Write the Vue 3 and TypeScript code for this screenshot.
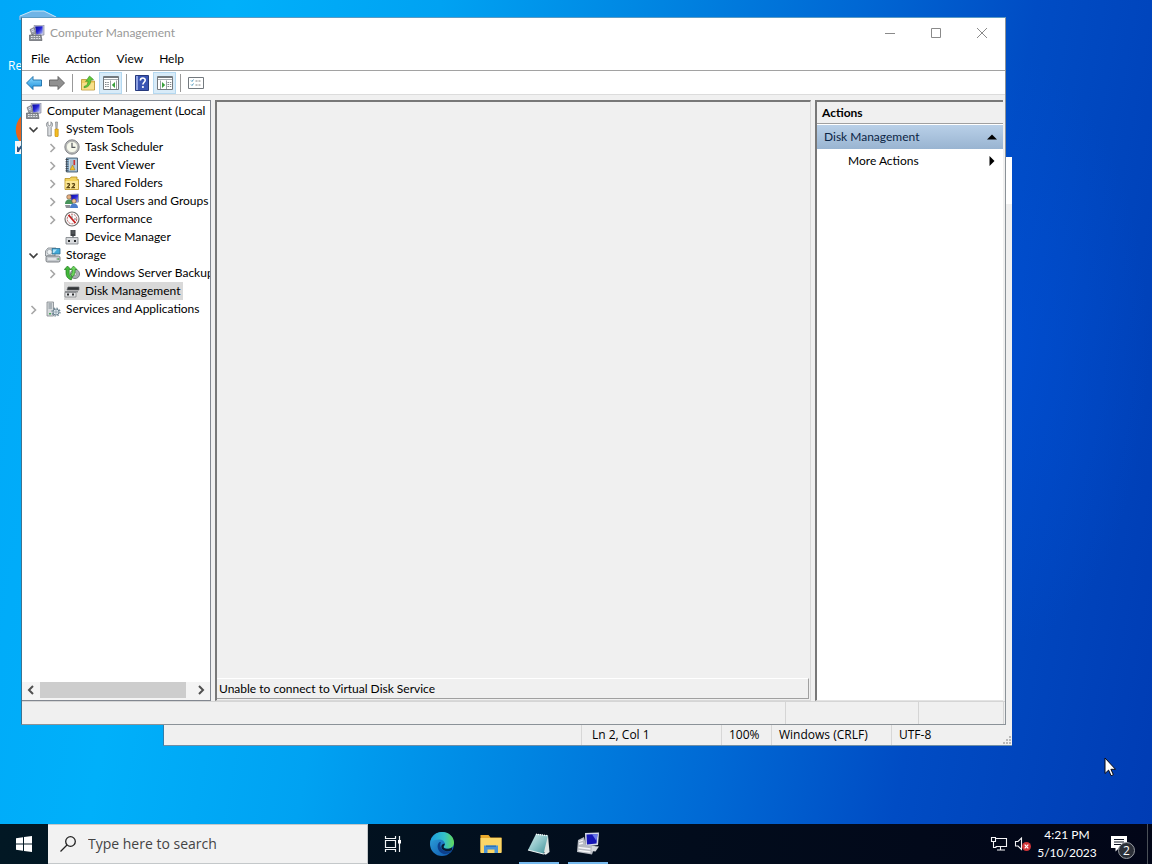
<script setup lang="ts">
import { ref } from 'vue'

interface TreeNode {
  label: string
  icon: string
  level: number
  state?: 'open' | 'closed'
  selected?: boolean
}

interface Tool {
  label: string
  icon: string
  pressed?: boolean
  divided?: boolean
}

const menus: string[] = ['File', 'Action', 'View', 'Help']

const tools: Tool[] = [
  { label: 'Back', icon: 'back' },
  { label: 'Forward', icon: 'forward', divided: true },
  { label: 'Up One Level', icon: 'up' },
  { label: 'Show/Hide Console Tree', icon: 'tree-pane', pressed: true, divided: true },
  { label: 'Help', icon: 'help' },
  { label: 'Show/Hide Action Pane', icon: 'action-pane', pressed: true, divided: true },
  { label: 'Properties', icon: 'props' },
]

const nodes: TreeNode[] = [
  { label: 'Computer Management (Local', icon: 'computer', level: 0 },
  { label: 'System Tools', icon: 'tools', level: 1, state: 'open' },
  { label: 'Task Scheduler', icon: 'clock', level: 2, state: 'closed' },
  { label: 'Event Viewer', icon: 'events', level: 2, state: 'closed' },
  { label: 'Shared Folders', icon: 'shared', level: 2, state: 'closed' },
  { label: 'Local Users and Groups', icon: 'users', level: 2, state: 'closed' },
  { label: 'Performance', icon: 'perf', level: 2, state: 'closed' },
  { label: 'Device Manager', icon: 'device', level: 2 },
  { label: 'Storage', icon: 'storage', level: 1, state: 'open' },
  { label: 'Windows Server Backup', icon: 'backup', level: 2, state: 'closed' },
  { label: 'Disk Management', icon: 'disk', level: 2, selected: true },
  { label: 'Services and Applications', icon: 'services', level: 1, state: 'closed' },
]

const search = ref('')
</script>

<template>
  <div class="screen">
    <svg class="defs" aria-hidden="true">
      <defs>
        <linearGradient id="g-screen" x1="0" y1="0" x2="1" y2="1">
          <stop offset="0" stop-color="#0a0a8c" /><stop offset=".5" stop-color="#2424d8" /><stop offset="1" stop-color="#b8c4f8" />
        </linearGradient>
        <linearGradient id="g-edge" x1="0" y1="0" x2="1" y2="1">
          <stop offset="0" stop-color="#2fa8e0" /><stop offset="1" stop-color="#0c4fa8" />
        </linearGradient>
        <linearGradient id="g-edge-top" x1="0" y1="0" x2="1" y2="0">
          <stop offset="0" stop-color="#1b9de0" /><stop offset=".6" stop-color="#35c1c8" /><stop offset="1" stop-color="#62d957" />
        </linearGradient>
        <linearGradient id="g-note" x1="0" y1="0" x2="1" y2="1">
          <stop offset="0" stop-color="#d8eeee" /><stop offset=".5" stop-color="#8cc4c8" /><stop offset="1" stop-color="#3f8f96" />
        </linearGradient>
        <linearGradient id="g-back" x1="0" y1="0" x2="0" y2="1">
          <stop offset="0" stop-color="#8fdcff" /><stop offset="1" stop-color="#1b8fdc" />
        </linearGradient>

        <symbol id="i-computer" viewBox="0 0 16 16">
          <path d="M5 0.5 15 0v10l-8 1z" fill="#c9cce0" stroke="#777a90" stroke-width=".6" />
          <path d="M6.2 1.6 13.6 1.2v7.4L7.4 9.4z" fill="url(#g-screen)" />
          <path d="M1 4.500 5 2.500l2 5.500-4 2z" fill="#9aa0ac" stroke="#555" stroke-width=".5" />
          <path d="M2.300 5.200l2.500-1.100M2.800 6.800l2.500-1.100" stroke="#eef" stroke-width=".8" />
          <path d="M0.500 10h11.500l1 5.500H0.500z" fill="#8b9096" stroke="#50545a" stroke-width=".6" />
          <path d="M2 11.500h9M2 13.500h10" stroke="#e6e8ea" stroke-width="1" stroke-dasharray="1.6 1" />
        </symbol>
        <symbol id="i-tools" viewBox="0 0 16 16">
          <path d="M3 .8v3l1.400 1L6 3.800v-3C8 2 8 5 6.200 6.400V15H2.800V6.400C1 5 1 2 3 .8z" fill="#dcdfe2" stroke="#777c82" stroke-width=".8" />
          <path d="M10.500 1h2l-.4 6.500h-1.200z" fill="#bfc4c8" stroke="#777" stroke-width=".6" />
          <path d="M10 8h3.200v6.500a1.600 1.600 0 0 1-3.200 0z" fill="#f3bd24" stroke="#c48c10" stroke-width=".7" />
        </symbol>
        <symbol id="i-clock" viewBox="0 0 16 16">
          <circle cx="8" cy="8" r="7.200" fill="#b9babc" stroke="#6f7072" stroke-width=".8" />
          <circle cx="8" cy="8" r="5.600" fill="#f6f8ec" stroke="#9b9c98" stroke-width=".5" />
          <path d="M8 3.800V8.400h3.400" fill="none" stroke="#55585c" stroke-width="1.200" />
        </symbol>
        <symbol id="i-events" viewBox="0 0 16 16">
          <path d="M2.500 1h11v14h-11z" fill="#8fb4d0" stroke="#4b5e70" stroke-width=".9" />
          <path d="M5 2.500h7.500v11H5z" fill="#cfdde8" />
          <path d="M6 4h5.500M6 6h5.500M6 8h5.500M6 10h5.500M6 12h5.500" stroke="#6d8ca4" stroke-width=".8" />
          <path d="M1.500 2.500h3M1.500 4.800h3M1.500 7.100h3M1.500 9.400h3M1.500 11.700h3M1.500 13.800h3" stroke="#333c46" stroke-width=".9" />
          <path d="M9.500 3h1.600v5H9.500z" fill="#cf2f2f" />
          <path d="M6 13l2.500-5L11 13z" fill="#f2c22c" stroke="#a27a0c" stroke-width=".5" />
        </symbol>
        <symbol id="i-shared" viewBox="0 0 16 16">
          <path d="M1 3.500h5l1-1.500h6v2.500h1.500v10H1z" fill="#f2d25c" stroke="#b58e20" stroke-width=".8" />
          <path d="M1.500 6h12.500v8H1.500z" fill="#fbe694" />
          <path d="M3 9.200c1-1.200 3-.6 2.400 1L3.200 12.600h2.800M8 9.200c1-1.200 3-.6 2.400 1l-2.200 2.400H11" fill="none" stroke="#5d4712" stroke-width="1.300" />
        </symbol>
        <symbol id="i-users" viewBox="0 0 16 16">
          <path d="M6 1.500 14.500 1v8l-7 .8z" fill="url(#g-screen)" stroke="#9ba0b8" stroke-width="1" />
          <circle cx="5" cy="4" r="2.300" fill="#e4b083" stroke="#5a3d20" stroke-width=".5" />
          <path d="M1 11c0-3 1.600-4.500 4-4.500S9 8 9 11z" fill="#47935a" />
          <circle cx="10" cy="8" r="2.200" fill="#eec08f" stroke="#5a3d20" stroke-width=".5" />
          <path d="M6 15c0-3 1.600-4.500 4-4.500s4 1.500 4 4.500z" fill="#4a7ccc" />
          <path d="M1 12h5v3H2z" fill="#8e9298" />
        </symbol>
        <symbol id="i-perf" viewBox="0 0 16 16">
          <circle cx="8" cy="8" r="7" fill="#fbfbfb" stroke="#74706f" stroke-width="1.200" />
          <circle cx="8" cy="8" r="4.800" fill="none" stroke="#b05a5a" stroke-width="1" stroke-dasharray="2 1" />
          <path d="M4.500 4l7 8" stroke="#c61f1f" stroke-width="1.800" />
          <path d="M8 4.500v2.500M10 8h2" stroke="#555" stroke-width=".8" />
        </symbol>
        <symbol id="i-device" viewBox="0 0 16 16">
          <path d="M6.500 1h5v6h-5z" fill="#3d4044" />
          <path d="M7.500 2h3M7.500 4h3" stroke="#777c80" stroke-width=".7" />
          <path d="M8 7h2v2H8z" fill="#8b8f94" />
          <path d="M2 8.500h12V15H2z" fill="#d8dadd" stroke="#7a7e83" stroke-width=".8" />
          <path d="M4 11h2v2H4zM10 11h2v2h-2z" fill="#26282a" />
        </symbol>
        <symbol id="i-storage" viewBox="0 0 16 16">
          <path d="M.5 4 3 1h8l-1 4v4H.5z" fill="#dfe3e6" stroke="#777e84" stroke-width=".8" />
          <path d="M7 1.500h8v5.500H7z" fill="#42a9d8" stroke="#2f6d90" stroke-width=".8" />
          <path d="M8 2.500h4L9 6H8z" fill="#b3e4f7" />
          <circle cx="4.500" cy="5" r="2.600" fill="#eef2f4" stroke="#8c9399" stroke-width=".7" />
          <rect x="1" y="9" width="14" height="6" rx="1.500" fill="#c5c9cd" stroke="#666b70" stroke-width=".8" />
          <path d="M3 12h8" stroke="#f5f6f7" stroke-width="1.200" />
          <path d="M12.500 11.200h1.300v1.500h-1.300z" fill="#36a53c" />
        </symbol>
        <symbol id="i-backup" viewBox="0 0 16 16">
          <circle cx="11" cy="9" r="4.600" fill="#a9aeb3" stroke="#696e73" stroke-width=".8" />
          <circle cx="11" cy="9" r="1.500" fill="#eee" stroke="#777" stroke-width=".5" />
          <path d="M3.500 1 7 4.500H5.200V8c0 2 1 3.500 3 4.500l-1 2.500C3.500 13.500 2 11.500 2 8V4.500H.3z" fill="#42b83a" stroke="#1f7a1c" stroke-width=".7" />
          <path d="M9.500 1 13 4.500h-1.800c0 3-.2 5-2.700 7.500L6.800 9.500C8.200 8.200 8.300 7 8.300 4.500H6.500z" fill="#6bd45c" stroke="#1f7a1c" stroke-width=".6" />
        </symbol>
        <symbol id="i-disk" viewBox="0 0 16 16">
          <path d="M4 4h11v3H3z" fill="#323537" stroke="#62666a" stroke-width=".7" />
          <path d="M1 8h13v1.500H1z" fill="#8b8e91" />
          <path d="M1 9.500h11V14H1z" fill="#e5e6e8" stroke="#77797c" stroke-width=".7" />
          <path d="M3 10.500h2v2H3zM8 10.500h2v2H8z" fill="#2d2f31" />
        </symbol>
        <symbol id="i-services" viewBox="0 0 16 16">
          <path d="M2 1h6.500v14H2z" fill="#d6dadd" stroke="#80868b" stroke-width=".8" />
          <path d="M3.500 3h3.500M3.500 5h3.500M3.500 7h3.500" stroke="#758088" stroke-width=".9" />
          <path d="M4 12h2v1.500H4z" fill="#4ba65a" />
          <circle cx="11" cy="11" r="3" fill="#dce7ee" stroke="#6d8492" stroke-width="1" />
          <circle cx="11" cy="11" r="4" fill="none" stroke="#6d8492" stroke-width="1.200" stroke-dasharray="1.500 1.640" />
          <circle cx="11" cy="11" r="1.100" fill="#fff" stroke="#6d8492" stroke-width=".7" />
        </symbol>

        <symbol id="i-back" viewBox="0 0 16 16">
          <path d="M.5 8 7 1.500v3.500h8.500v6H7v3.500z" fill="url(#g-back)" stroke="#1c6ea8" stroke-width=".9" stroke-linejoin="round" />
        </symbol>
        <symbol id="i-forward" viewBox="0 0 16 16">
          <path d="M15.500 8 9 1.500v3.500H.5v6H9v3.500z" fill="#909090" stroke="#5d5d5d" stroke-width=".9" stroke-linejoin="round" />
        </symbol>
        <symbol id="i-up" viewBox="0 0 16 16">
          <path d="M1.500 4.500h5l1 1.500h7v9h-13z" fill="#f0cf62" stroke="#b99330" stroke-width=".8" />
          <path d="M2 8h12v6.500H2z" fill="#f8e08a" />
          <path d="M4 11.500c3-.5 4-3 4-5.500L5.600 6.500 9.500 1l4 3.500-2.800.8c.2 4-2.700 7.400-6.700 7.400z" fill="#5fc83a" stroke="#3a8f20" stroke-width=".6" />
        </symbol>
        <symbol id="i-tree-pane" viewBox="0 0 16 16">
          <path d="M.5 1.500h15v13H.5z" fill="#fff" stroke="#73797e" />
          <path d="M.5 2.500h15" stroke="#73797e" stroke-width="1" /><path d="M1 4.500h14" stroke="#a5aaae" />
          <path d="M7.500 5.500V14M13.500 5.500V14" stroke="#9aa0a4" />
          <path d="M2 7.500h4M2 9.500h4M2 11.500h4" stroke="#83898d" stroke-dasharray="1.500 .8" />
          <path d="M12 7v6L8.800 10z" fill="#39a03a" />
        </symbol>
        <symbol id="i-action-pane" viewBox="0 0 16 16">
          <path d="M.5 1.500h15v13H.5z" fill="#fff" stroke="#73797e" />
          <path d="M.5 2.500h15" stroke="#73797e" /><path d="M1 4.500h14" stroke="#a5aaae" />
          <path d="M3.500 5.500V14M9.500 5.500V14" stroke="#9aa0a4" />
          <path d="M10.500 7.500h4M10.500 9.500h4M10.500 11.500h4" stroke="#83898d" stroke-dasharray="1.500 .8" />
          <path d="M5 7v6l3.200-3z" fill="#39a03a" />
        </symbol>
        <symbol id="i-help" viewBox="0 0 16 16">
          <path d="M1.500.5h13v15h-13z" fill="#3a55b4" stroke="#26397c" />
          <path d="M2 1h2v14H2z" fill="#8fa2e2" />
          <path d="M6.400 5.500c0-3.400 5-3.200 4.800-.2-.1 1.900-2.300 2-2.300 4.200" fill="none" stroke="#fff" stroke-width="1.600" />
          <circle cx="8.900" cy="12" r="1.100" fill="#fff" />
        </symbol>
        <symbol id="i-props" viewBox="0 0 16 16">
          <path d="M.5 2.500h15v11H.5z" fill="#fff" stroke="#73797e" />
          <path d="M3 5.500l1 1 1.500-2M3 9.500l1 1L5.500 8.500" fill="none" stroke="#3c8fb8" stroke-width=".9" />
          <path d="M7.500 6h6M7.500 10h6" stroke="#888" stroke-dasharray="2 1" />
        </symbol>
        <symbol id="i-open" viewBox="0 0 16 16">
          <path d="M3.500 6.500l4 4 4-4" fill="none" stroke="#404040" stroke-width="1.700" />
        </symbol>
        <symbol id="i-closed" viewBox="0 0 16 16">
          <path d="M5.500 5 9.500 9l-4 4" fill="none" stroke="#a6a6a6" stroke-width="1.600" />
        </symbol>
      </defs>
    </svg>

    <main class="desktop">
      <svg class="bin" viewBox="0 0 40 10" aria-hidden="true">
        <path d="M0 6 13 1h12l13 6v3H0z" fill="#6fb4e6" /><path d="M1 6 13 1h12l12 6" fill="none" stroke="#c7e4f8" />
      </svg>
      <span class="bin-label">Re</span>
      <svg class="shortcut" viewBox="0 0 20 50" aria-hidden="true">
        <path d="M20 2C3 8 0 22 5 32c3 6 9 8 15 8z" fill="#e8641c" /><path d="M20 2C11 6 8 16 9 24l11 4z" fill="#a63a2c" />
        <path d="M2 34h18v13H2z" fill="#f4f6f8" /><path d="M4 45V39l2 2c1-2 2-3 4-3v3c-2 0-3 1-4 4z" fill="#2c4f80" />
      </svg>

      <section class="notepad" aria-label="Text editor">
        <div class="notepad-top"></div>
        <div class="notepad-body"></div>
        <footer class="notepad-status">
          <span class="cell grow"></span>
          <span class="cell position">Ln 2, Col 1</span>
          <span class="cell zoom">100%</span>
          <span class="cell endings">Windows (CRLF)</span>
          <span class="cell encoding">UTF-8</span>
          <svg class="grip" viewBox="0 0 10 10" aria-hidden="true">
            <path d="M7 1h2v2H7zM7 4h2v2H7zM4 4h2v2H4zM7 7h2v2H7zM4 7h2v2H4zM1 7h2v2H1z" fill="#b9b9b9" />
          </svg>
        </footer>
      </section>

      <section class="window" aria-label="Computer Management">
        <header class="titlebar">
          <svg class="icon"><use href="#i-computer" /></svg>
          <h1 class="title">Computer Management</h1>
          <div class="controls">
            <button type="button" aria-label="Minimize"><svg viewBox="0 0 12 12"><path d="M1 6.500h10" /></svg></button>
            <button type="button" aria-label="Maximize"><svg viewBox="0 0 12 12"><path d="M1.500 1.500h9v9h-9z" /></svg></button>
            <button type="button" aria-label="Close"><svg viewBox="0 0 12 12"><path d="M1 1l10 10M11 1 1 11" /></svg></button>
          </div>
        </header>
        <nav class="menubar">
          <button v-for="menu in menus" :key="menu" type="button">{{ menu }}</button>
        </nav>
        <div class="toolbar">
          <button
            v-for="tool in tools"
            :key="tool.label"
            type="button"
            :class="{ pressed: tool.pressed, divided: tool.divided }"
            :aria-label="tool.label"
          >
            <svg class="icon"><use :href="'#i-' + tool.icon" /></svg>
          </button>
        </div>

        <div class="panes">
          <aside class="tree-pane">
            <ul class="tree">
              <li v-for="node in nodes" :key="node.label" :class="['node', 'level-' + node.level]">
                <span v-if="node.level > 0" class="toggle">
                  <svg v-if="node.state" class="icon"><use :href="'#i-' + node.state" /></svg>
                </span>
                <button type="button" :class="['node-button', { selected: node.selected }]">
                  <svg class="icon"><use :href="'#i-' + node.icon" /></svg>
                  <span class="node-label">{{ node.label }}</span>
                </button>
              </li>
            </ul>
            <div class="scrollbar">
              <button type="button" aria-label="Scroll left"><svg viewBox="0 0 8 10"><path d="M6 1 2 5l4 4" /></svg></button>
              <div class="track"><div class="thumb"></div></div>
              <button type="button" aria-label="Scroll right"><svg viewBox="0 0 8 10"><path d="M2 1l4 4-4 4" /></svg></button>
            </div>
          </aside>

          <section class="content-pane">
            <p class="message">Unable to connect to Virtual Disk Service</p>
          </section>

          <aside class="actions-pane">
            <h2 class="actions-title">Actions</h2>
            <button type="button" class="actions-group">
              <span>Disk Management</span>
              <svg viewBox="0 0 10 10"><path d="M0 7.500h10L5 2.500z" /></svg>
            </button>
            <button type="button" class="actions-item">
              <span>More Actions</span>
              <svg viewBox="0 0 10 10"><path d="M2.500 0v10l5-5z" /></svg>
            </button>
          </aside>
        </div>

        <footer class="statusbar">
          <span></span><span class="status-mid"></span><span class="status-end"></span>
        </footer>
      </section>

      <svg class="cursor" viewBox="0 0 12 20" aria-hidden="true">
        <path d="M1 1v15.500l3.600-3.400 2.500 5.600 2.300-1-2.500-5.400h4.600z" fill="#fff" stroke="#0a0a14" />
      </svg>
    </main>

    <footer class="taskbar">
      <button type="button" class="start" aria-label="Start">
        <svg viewBox="0 0 16 16"><path d="M0 2.200 7 1.200v6.300H0zM8 1.100 16 0v7.500H8zM0 8.500h7v6.300l-7-1zM8 8.500h8V16l-8-1.100z" fill="#fff" /></svg>
      </button>
      <label class="search">
        <svg viewBox="0 0 16 16" aria-hidden="true"><circle cx="10.500" cy="5.500" r="4.800" /><path d="M7 9 .5 15.500" /></svg>
        <input v-model="search" type="text" placeholder="Type here to search" aria-label="Search" />
      </label>
      <div class="apps">
        <button type="button" aria-label="Task View">
          <svg class="task-view" viewBox="0 0 18 18"><path d="M1.500 1v2.500h10V1M1.500 17v-2.500h10V17M1.500 5.500h10v7h-10zM15.500 1v16" fill="none" stroke="#f2f4f6" stroke-width="1.200" /><path d="M14 5h3v3.500h-3z" fill="#fff" /></svg>
        </button>
        <button type="button" aria-label="Edge">
          <svg viewBox="0 0 24 24">
            <circle cx="12" cy="12" r="12" fill="url(#g-edge)" />
            <path d="M.3 10C1.500 4 6 0 12 0c7 0 12 5 12 10.500 0 4-3 6.300-6.500 6.300-2.500 0-3.800-1-3.800-2 0-.8 1.100-1.200 1.100-3 0-2.300-2.300-4.300-5.600-4.300C5 7.500 1.500 8.500.3 10z" fill="url(#g-edge-top)" />
            <path d="M9.500 10c-3.500 3-2 10 3.500 11.700 3 .9 6.500-.2 9-2.900-3 1.300-6.500 1-9-.8C10.300 16 9.500 13 11 10.300z" fill="#0d3f8c" />
            <path d="M14.500 11.500c1 2.200-1.800 2.600-.5 4.200 1.500 1.700 5 1.500 8.200-.4l-.3 3c-3 1.500-7 1.300-9.200-.8-2-2-2-5 1.800-6z" fill="#071c33" />
          </svg>
        </button>
        <button type="button" aria-label="File Explorer">
          <svg viewBox="0 0 24 24">
            <path d="M1.500 3h8l2 2.500h11V20h-21z" fill="#e9a92c" /><path d="M1.500 6h21v15h-21z" fill="#fbd667" />
            <path d="M5 13.500h14V21h-3.500v-3.500h-7V21H5z" fill="#4a94d6" /><path d="M7 13.500h10v1.500H7z" fill="#2c74b8" />
          </svg>
        </button>
        <button type="button" class="running" aria-label="Notepad">
          <svg viewBox="0 0 24 24"><path d="M9 2 21 3.500 22.500 20l-4 3z" fill="#dfe5e2" /><path d="M9 2l12 1.500L16.500 22 1 18z" fill="url(#g-note)" /><path d="M1 18l15.500 4L20 21" fill="none" stroke="#eef4f4" stroke-width="1.200" /><path d="M9 2.300 21 3.800" stroke="#fff" stroke-width="1.400" stroke-dasharray="1 1" /></svg>
        </button>
        <button type="button" class="running" aria-label="Computer Management">
          <svg viewBox="0 0 24 24">
            <path d="M9 1 23 .5 22 13l-12.500 1.500z" fill="#d5d9e8" /><path d="M10.500 2.500 21.500 2 20.500 11.500l-9.500 1z" fill="#1414b4" /><path d="M16 2.300l5.500-.3-1 7z" fill="#6b78ea" />
            <path d="M2 8l6-3 2 8 9 1-3 8.500L1 20z" fill="#b7bbc2" /><path d="M3 9.500l4-1.500M3 12l4-1M2.500 15.500l12 1.500M2.500 18.500l12 1.500" stroke="#f5f6f8" stroke-width="1.300" /><path d="M16 14l7 .5-3.500 5-4-.5z" fill="#d5d8dc" />
          </svg>
        </button>
      </div>
      <div class="tray">
        <svg class="network" viewBox="0 0 18 16" aria-hidden="true"><path d="M5.500 2.500h11v8H5.500M10.500 10.500v3M7 14h8M1.500 1.500h4v4h-4zM3.500 5.500v6h3" fill="none" stroke="#f4f4f6" stroke-width="1.100" /></svg>
        <svg class="volume" viewBox="0 0 18 16" aria-hidden="true"><path d="M1.500 5.500h2.500L7.500 2v11.500L4 10H1.500z" fill="none" stroke="#f4f4f6" stroke-width="1.100" /><circle cx="12.500" cy="10.500" r="4.500" fill="#d13438" /><path d="M10.700 8.700l3.600 3.600M14.300 8.700l-3.600 3.600" stroke="#fff" stroke-width="1.200" /></svg>
        <div class="clock"><span>4:21 PM</span><span>5/10/2023</span></div>
        <button type="button" class="notify" aria-label="Notifications">
          <svg viewBox="0 0 18 18"><path d="M1 1h16v12H9l-3.500 3.500V13H1z" fill="#fff" /><path d="M4 4.500h10M4 7h10M4 9.500h7" stroke="#0a1020" /></svg>
          <span class="badge">2</span>
        </button>
        <span class="peek"></span>
      </div>
    </footer>
  </div>
</template>

<style>
body {
  margin: 0;
}
</style>

<style scoped>
.screen {
  display: flex;
  flex-direction: column;
  height: 100vh;
  overflow: hidden;
  font: 12px/18px "Open Sans", "Noto Sans", sans-serif;
  color: #000;
}
.screen * { box-sizing: border-box; }
.defs { position: absolute; width: 0; height: 0; }
button {
  padding: 0;
  border: 0;
  background: none;
  font: inherit;
  color: inherit;
}
svg { display: block; flex: none; }
.icon { width: 16px; height: 16px; }

.desktop {
  position: relative;
  flex: 1;
  min-height: 0;
  background:
    radial-gradient(ellipse 150px 300px at 1000px 350px, rgba(0, 80, 220, 0.5), rgba(0, 70, 200, 0) 100%),
    linear-gradient(100deg, #00a8f8 0%, #00b0fa 18%, #00a2f2 34%, #0086e2 50%, #0068d4 66%, #004cc4 80%, #003cb4 100%);
}
.bin { position: absolute; left: 19px; top: 10px; width: 40px; height: 10px; }
.bin-label { position: absolute; left: 8px; top: 57px; color: #fff; }
.shortcut { position: absolute; left: 13px; top: 107px; width: 20px; height: 50px; }

.notepad {
  position: absolute;
  left: 163px;
  right: 140px;
  top: 157px;
  bottom: 78px;
  display: flex;
  flex-direction: column;
  border-left: 1px solid #2f7fae;
  border-bottom: 1px solid #6f8ea6;
  background: #f0f0f0;
}
.notepad-top { height: 47px; background: #fff; }
.notepad-body { flex: 1; }
.notepad-status { display: flex; height: 21px; line-height: 21px; }
.cell { border-left: 1px solid #d7d7d7; padding-left: 7px; white-space: nowrap; }
.grow { flex: 1; border: 0; }
.position { width: 140px; padding-left: 10px; }
.zoom { width: 50px; }
.endings { width: 120px; }
.encoding { width: 111px; }
.grip { align-self: flex-end; width: 10px; height: 10px; }

.window {
  position: absolute;
  left: 21px;
  right: 146px;
  top: 17px;
  bottom: 99px;
  display: flex;
  flex-direction: column;
  border: 1px solid #8b9298;
  border-left-color: #3e7391;
  border-top-color: #5b9bc4;
  background: #f0f0f0;
  font-family: Lato, "Open Sans", sans-serif;
}
.titlebar {
  display: flex;
  align-items: center;
  height: 29px;
  padding-left: 7px;
  background: #fff;
}
.title { margin: 0 0 0 5px; font-size: 12px; font-weight: 400; color: #999; }
.controls { display: flex; margin-left: auto; }
.controls button { display: grid; place-items: center; width: 46px; height: 29px; }
.controls svg { width: 12px; height: 12px; fill: none; stroke: #8a8a8a; }
.menubar {
  display: flex;
  gap: 16px;
  height: 24px;
  padding-left: 9px;
  border-bottom: 1px solid #a2a2a2;
  background: #fff;
}
.toolbar {
  display: flex;
  align-items: center;
  height: 24px;
  border-bottom: 1px solid #dcdcdc;
  background: #fff;
}
.toolbar button {
  display: grid;
  place-items: center;
  width: 23px;
  height: 22px;
  border: 1px solid transparent;
}
.toolbar .pressed { background: #d8ebf8; border-color: #b4d8f0; }
.toolbar .divided { position: relative; margin-right: 8px; }
.toolbar .divided::after {
  content: "";
  position: absolute;
  left: 26px;
  top: 1px;
  width: 1px;
  height: 18px;
  background: #999;
}

.panes { display: flex; flex: 1; min-height: 0; gap: 4px; padding-top: 5px; }
.tree-pane {
  display: flex;
  flex-direction: column;
  width: 189px;
  border: 1px solid #828790;
  border-left: 0;
  background: #fff;
}
.tree { flex: 1; min-height: 0; margin: 0; padding: 1px 0 0 4px; list-style: none; overflow: hidden; }
.node { display: flex; gap: 3px; height: 18px; }
.level-2 { padding-left: 19px; }
.toggle { display: flex; align-items: center; width: 16px; flex: none; }
.node-button { display: flex; align-items: center; gap: 2px; }
.node-label { padding-left: 3px; white-space: nowrap; }
.selected { padding-right: 3px; background: #d9d9d9; }
.scrollbar { display: flex; height: 18px; padding-bottom: 2px; background: #f4f4f4; }
.scrollbar button { display: grid; place-items: center; width: 18px; }
.scrollbar svg { width: 8px; height: 10px; fill: none; stroke: #505050; stroke-width: 2; }
.track { flex: 1; }
.thumb { width: 96%; height: 100%; background: #cdcdcd; }

.content-pane {
  display: flex;
  flex-direction: column;
  justify-content: flex-end;
  flex: 1;
  min-width: 0;
  border: 1px solid #d8d8d8;
  border-top: 2px solid #787878;
  border-left: 2px solid #787878;
}
.message {
  height: 21px;
  margin: 0 1px 1px 0;
  padding-left: 2px;
  border: 1px solid #a0a0a0;
  border-top-color: #fff;
  border-left: 0;
  line-height: 19px;
}
.actions-pane {
  display: flex;
  flex-direction: column;
  width: 188px;
  margin-right: 2px;
  border-top: 2px solid #787878;
  border-left: 2px solid #787878;
  border-bottom: 1px solid #e3e3e3;
  background: #fff;
}
.actions-title {
  height: 22px;
  margin: 0;
  padding-left: 5px;
  border-bottom: 1px solid #a0a0a0;
  background: #f0f0f0;
  font-size: 12px;
  font-weight: 700;
  line-height: 22px;
}
.actions-group, .actions-item {
  display: flex;
  align-items: center;
  justify-content: space-between;
  text-align: left;
}
.actions-group {
  height: 25px;
  padding: 0 6px 0 7px;
  border-top: 1px solid #fff;
  background: linear-gradient(#b9d0e8, #99b4d1);
  color: #0b2545;
}
.actions-item { height: 24px; padding: 0 6px 0 31px; }
.actions-pane svg { width: 10px; height: 10px; }

.statusbar {
  display: flex;
  height: 23px;
  border-top: 1px solid #d5d5d5;
}
.statusbar span:first-child { flex: 1; }
.status-mid, .status-end { border-left: 1px solid #d5d5d5; }
.status-mid { width: 133px; }
.status-end { width: 86px; margin-right: 1px; border-right: 1px solid #d5d5d5; }

.cursor { position: absolute; left: 1104px; top: 757px; width: 12px; height: 20px; }

.taskbar {
  display: flex;
  height: 40px;
  background: linear-gradient(90deg, #021824, #020c1c 60%, #020618);
  color: #fff;
}
.start { display: grid; place-items: center; width: 48px; }
.start svg { width: 16px; height: 16px; }
.search {
  display: flex;
  align-items: center;
  gap: 12px;
  width: 320px;
  padding-left: 12px;
  border: 1px solid #c4c8ca;
  border-left: 0;
  background: #f2f2f2;
}
.search svg { width: 16px; height: 16px; fill: none; stroke: #222; stroke-width: 1.3; }
.search input {
  flex: 1;
  min-width: 0;
  padding: 0;
  border: 0;
  outline: 0;
  background: none;
  font: 14px/20px "Open Sans", "Noto Sans", sans-serif;
}
.search input::placeholder { color: #444; opacity: 1; }
.apps { display: flex; }
.apps button { display: grid; place-items: center; width: 49px; }
.apps svg { width: 24px; height: 24px; }
.apps .task-view { width: 18px; height: 18px; }
.apps .running { box-shadow: inset 0 -2px #76b9ed; width: 40px; margin: 0 5px 0 4px; }
.tray { display: flex; align-items: center; margin-left: auto; }
.network { width: 18px; height: 16px; margin-right: 6px; }
.volume { width: 18px; height: 16px; margin-right: 9px; }
.clock {
  display: flex;
  flex-direction: column;
  align-items: center;
  width: 52px;
  white-space: nowrap;
  font-family: Lato, "Open Sans", sans-serif;
}
.notify { display: grid; place-items: start; position: relative; width: 54px; height: 40px; padding: 11px 0 0 17px; }
.notify svg { width: 18px; height: 18px; }
.badge {
  position: absolute;
  left: 25px;
  top: 18px;
  width: 17px;
  height: 17px;
  border: 1px solid #9a9ea4;
  border-radius: 50%;
  background: #2c3038;
  font-size: 12px;
  line-height: 15px;
  text-align: center;
}
.peek { width: 5px; height: 40px; border-left: 1px solid #4a5058; }
</style>
